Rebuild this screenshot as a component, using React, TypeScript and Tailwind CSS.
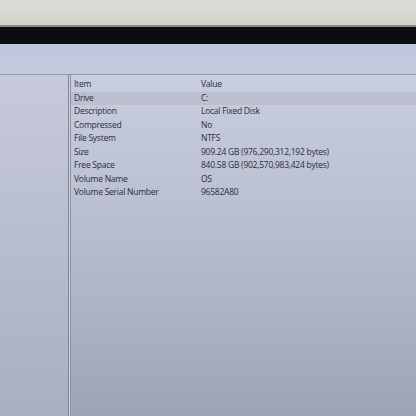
import React from 'react'

const rows: [string, string][] = [
  ['Drive', 'C:'],
  ['Description', 'Local Fixed Disk'],
  ['Compressed', 'No'],
  ['File System', 'NTFS'],
  ['Size', '909.24 GB (976,290,312,192 bytes)'],
  ['Free Space', '840.58 GB (902,570,983,424 bytes)'],
  ['Volume Name', 'OS'],
  ['Volume Serial Number', '96582A80'],
]

export default function App() {
  return (
    <div className="w-[416px] h-[416px] overflow-hidden flex flex-col bg-[#aab0c0] font-['Open_Sans',sans-serif]">
      {/* bezel */}
      <div className="h-[25px] bg-gradient-to-b from-[#dcdbd6] to-[#d4d2cc]" />
      <div className="h-[2px] bg-[#8a8a88]" />
      <div className="h-[17px] bg-[#0d0d10]" />

      {/* screen */}
      <div className="flex-1 flex flex-col">
        <div className="h-[15px] bg-[#c0c8e0]" />
        <div className="h-[15px] bg-[#c4cade]" />
        <div className="h-px bg-[#9298aa]" />

        <div className="flex-1 flex">
          {/* left pane */}
          <div className="w-[68px] bg-gradient-to-b from-[#c6cadc] via-[#b8bdcd] to-[#a9afbf]" />
          <div className="w-px bg-[#7f8596]" />
          <div className="w-px bg-[#d0d4e0]" />
          <div className="w-px bg-[#8d93a4]" />

          {/* right pane */}
          <div className="flex-1 pt-[3px] pl-[3px] text-[8.5px] tracking-[-0.25px] text-[#2c2e36] bg-gradient-to-b from-[#c8cde0] via-[#b6bccd] to-[#9ea4b7]">
            <div className="flex h-[13.5px] items-center">
              <div className="w-[127px]">Item</div>
              <div>Value</div>
            </div>
            {rows.map(([k, v], i) => (
              <div
                key={k}
                className={`flex h-[13.5px] items-center ${i === 0 ? 'bg-[#bcc0ce] -ml-[3px] pl-[3px]' : ''}`}
              >
                <div className="w-[127px]">{k}</div>
                <div>{v}</div>
              </div>
            ))}
          </div>
        </div>
      </div>
    </div>
  )
}
